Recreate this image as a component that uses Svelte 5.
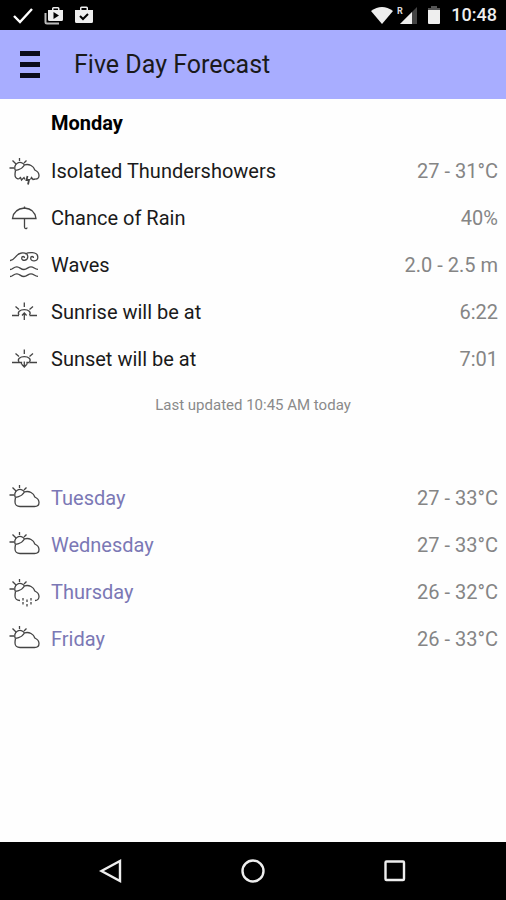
<script>
  const today = [
    { icon: "thunder", label: "Isolated Thundershowers", value: "27 - 31°C" },
    { icon: "umbrella", label: "Chance of Rain", value: "40%" },
    { icon: "waves", label: "Waves", value: "2.0 - 2.5 m" },
    { icon: "sunrise", label: "Sunrise will be at", value: "6:22" },
    { icon: "sunset", label: "Sunset will be at", value: "7:01" },
  ];

  const days = [
    { icon: "cloudy", label: "Tuesday", value: "27 - 33°C" },
    { icon: "cloudy", label: "Wednesday", value: "27 - 33°C" },
    { icon: "rain", label: "Thursday", value: "26 - 32°C" },
    { icon: "cloudy", label: "Friday", value: "26 - 33°C" },
  ];
</script>

{#snippet weatherIcon(name)}
  <svg class="icon" viewBox="0 0 32 32" aria-hidden="true">
    {#if name === "cloudy" || name === "thunder" || name === "rain"}
      <path d="M1.500 13H6M4.500 5.500L8 9M11.500 3V6M18.500 5.500L16 8" />
      <path d="M7.500 15.500A5 5 0 1 1 16.500 10" />
      <path d="M7.500 15.500C11 14.200 13.500 15 16.500 10" />
    {/if}
    {#if name === "cloudy"}
      <path d="M16.500 10C21 8.300 26 11.500 26.800 15C29 16 31 17.800 31 20.500C31 23 29 24.500 26.500 24.500H12C9 24.500 7 22.500 7 20C7 18 7.200 17 7.500 15.500" />
    {:else if name === "thunder"}
      <path d="M10.500 24C8 23.500 7 22 7 20C7 18 7.200 17 7.500 15.500M16.500 10C21 8.300 26 11.500 26.800 15C29 16 31 17.800 31 20.500C31 22.500 29.500 24 27.500 24" />
      <path d="M10.500 24L12.500 22.500L13.500 25L16 22.500L17 24.500M22.500 24.500L23.500 22.500L25 24.500L27.500 24" />
      <path d="M19.500 21L18.500 25H21L20 29.500" stroke-width="1.8" />
    {:else if name === "rain"}
      <path d="M12 24.500C9 24.500 7 22.500 7 20C7 18 7.200 17 7.500 15.500M16.500 10C21 8.300 26 11.500 26.800 15C29 16 31 17.800 31 20.500C31 22.500 29.500 24.500 27 24.500" />
      <path d="M15 22V24.500M15 26V28.500M19 23.500V26M19 28V30.500M23 22V24.500M23 26V28.500" />
    {:else if name === "umbrella"}
      <path d="M4.500 16.500C5.500 9 10 6.500 16.500 6C23 6.500 27 9 28 16.500Z" />
      <path d="M16.500 4.500V6M16.500 16.500V25C16.500 27 19 27.200 19 25.500" />
    {:else if name === "waves"}
      <path d="M2 11.500C7 12 7.500 4.500 13.500 4C17 3.600 19.500 5 19.800 7.500C20 12 13.500 12.500 13.700 9C13.800 7 16.500 7 16.500 9" />
      <path d="M17 5C20 3.500 29.500 2 29.800 8C30 13 22.500 13 22.700 9C22.800 7 25.500 7 25.500 9" />
      <path d="M2 20.500C5 20.500 5.500 17.500 9 17.800C12 18 12.500 20.500 16 20.500C19 20.500 20 17.800 23 17.800C26 17.800 26.500 20.300 30 20.300" />
      <path d="M2 27.500C5 27.500 5.500 24.500 9 24.800C12 25 12.500 27.500 16 27.500C19 27.500 20 24.800 23 24.800C26 24.800 26.500 27.300 30 27.300" />
    {:else}
      <path d="M4 19.500H11M21.500 19.500H29M7.500 10.500L11 13.500M25 10.500L21.500 13.500M16.300 6.500V11" />
      <path d="M11 19C9 16 12 13.700 16.300 13.700S23.500 16 21.500 19" />
      {#if name === "sunrise"}
        <path d="M14 19.500L16.300 17L18.600 19.500M16.300 17V24" />
      {:else}
        <path d="M11 19.500H13.500V21.500M21.500 19.500H19V21.500M14 21.500L16.300 24L18.600 21.500M16.300 18.500V25" />
      {/if}
    {/if}
  </svg>
{/snippet}

<div class="screen">
  <div class="status-bar">
    <svg class="status-icon check" viewBox="0 0 22 20" aria-label="Done">
      <path d="M2 11L8 17L20 4" fill="none" stroke="#fff" stroke-width="2.4" />
    </svg>
    <svg class="status-icon" viewBox="0 0 20 20" aria-label="Play Store">
      <path d="M1.500 8V17Q1.500 18.500 3 18.500H15" fill="none" stroke="#bbb" stroke-width="2" />
      <path d="M4 5H8V3.500Q8 2 9.500 2H14Q15.500 2 15.500 3.500V5H19V14.500Q19 16 17.500 16H5.500Q4 16 4 14.500ZM9.500 5H14V3.500H9.500Z" fill="#eee" fill-rule="evenodd" />
      <path d="M9.500 7L15 10.500L9.500 14Z" fill="#000" />
    </svg>
    <svg class="status-icon" viewBox="0 0 20 20" aria-label="Updates installed">
      <path d="M1 5H6V3Q6 1.500 7.500 1.500H12.500Q14 1.500 14 3V5H19V16.500Q19 18 17.500 18H2.500Q1 18 1 16.500ZM7.500 5H12.500V3H7.500Z" fill="#eee" fill-rule="evenodd" />
      <path d="M6 11L9 14L14 9" fill="none" stroke="#000" stroke-width="2" />
    </svg>
    <svg class="status-icon wifi" viewBox="0 0 22 20" aria-label="Wi-Fi">
      <path d="M0 6Q11 -2 22 6L11 19Z" fill="#eee" />
    </svg>
    <svg class="status-icon signal" viewBox="0 0 20 20" aria-label="Signal, roaming">
      <path d="M3 19L20 2V19Z" fill="#444" />
      <path d="M3 19L15 7V19Z" fill="#eee" />
      <text x="0" y="9" fill="#ddd" font-size="9" font-weight="700">R</text>
    </svg>
    <svg class="status-icon battery" viewBox="0 0 14 20" aria-label="Battery">
      <path d="M4 1H10V3H13V6H1V3H4Z" fill="#555" />
      <path d="M1 5H13V18Q13 19 12 19H2Q1 19 1 18Z" fill="#eee" />
    </svg>
    <time>10:48</time>
  </div>

  <header>
    <button class="menu" aria-label="Open menu">
      <span></span>
      <span></span>
      <span></span>
    </button>
    <h1>Five Day Forecast</h1>
  </header>

  <main>
    <h2>Monday</h2>
    <ul>
      {#each today as item}
        <li>
          {@render weatherIcon(item.icon)}
          <span class="label">{item.label}</span>
          <span class="value">{item.value}</span>
        </li>
      {/each}
    </ul>
    <p class="updated">Last updated 10:45 AM today</p>

    <ul class="days">
      {#each days as day}
        <li>
          {@render weatherIcon(day.icon)}
          <a class="label" href="#{day.label.toLowerCase()}">{day.label}</a>
          <span class="value">{day.value}</span>
        </li>
      {/each}
    </ul>
  </main>

  <nav>
    <button aria-label="Back">
      <svg viewBox="0 0 26 26"><path d="M22 3V23L3.500 13Z" /></svg>
    </button>
    <button aria-label="Home">
      <svg viewBox="0 0 26 26"><circle cx="13" cy="13" r="10.500" /></svg>
    </button>
    <button aria-label="Recent apps">
      <svg viewBox="0 0 26 26"><rect x="3.500" y="3.500" width="18.500" height="18.500" rx="1" /></svg>
    </button>
  </nav>
</div>

<style>
  :global(body) {
    margin: 0;
    background: #fefefe;
  }

  .screen {
    display: flex;
    flex-direction: column;
    min-height: 100vh;
    font-family: Roboto, "Liberation Sans", sans-serif;
    color: #1a1a1a;
  }

  .status-bar {
    display: flex;
    align-items: center;
    gap: 10px;
    height: 30px;
    padding: 0 9px 0 12px;
    background: #000;
    color: #eee;
  }

  .status-icon {
    width: 20px;
    height: 20px;
  }

  .check {
    width: 22px;
  }

  .wifi {
    width: 22px;
    margin-left: auto;
  }

  .signal {
    margin-left: -6px;
  }

  .battery {
    width: 14px;
  }

  time {
    font-size: 18px;
    font-weight: 500;
    line-height: 20px;
  }

  header {
    display: flex;
    align-items: center;
    gap: 34px;
    height: 69px;
    padding: 0 20px;
    background: #a8adff;
  }

  .menu {
    display: flex;
    flex-direction: column;
    gap: 6px;
    width: 20px;
    padding: 0;
    border: none;
    background: none;
    cursor: pointer;
  }

  .menu span {
    height: 5px;
    background: #0c0c18;
  }

  h1 {
    margin: 0;
    font-size: 25px;
    font-weight: 400;
    line-height: 32px;
  }

  main {
    flex: 1;
    padding: 0 8px;
  }

  h2 {
    margin: 0 0 0 43px;
    font-size: 20px;
    font-weight: 700;
    line-height: 48px;
    color: #000;
  }

  ul {
    margin: 0;
    padding: 0;
    list-style: none;
  }

  li {
    display: flex;
    align-items: center;
    height: 47px;
    font-size: 20px;
  }

  .icon {
    width: 32px;
    height: 32px;
    margin-right: 11px;
    fill: none;
    stroke: #444;
    stroke-width: 1.3;
  }

  .value {
    margin-left: auto;
    color: #858585;
  }

  .updated {
    margin: 0;
    font-size: 15px;
    line-height: 46px;
    text-align: center;
    color: #8a8a8a;
  }

  .days {
    margin-top: 46px;
  }

  .days .label {
    color: #7b78b5;
    text-decoration: none;
  }

  nav {
    display: flex;
    justify-content: center;
    gap: 116px;
    height: 58px;
    background: #000;
  }

  nav button {
    display: flex;
    align-items: center;
    padding: 0;
    border: none;
    background: none;
    cursor: pointer;
  }

  nav svg {
    width: 26px;
    height: 26px;
    fill: none;
    stroke: #eee;
    stroke-width: 2.4;
  }
</style>
